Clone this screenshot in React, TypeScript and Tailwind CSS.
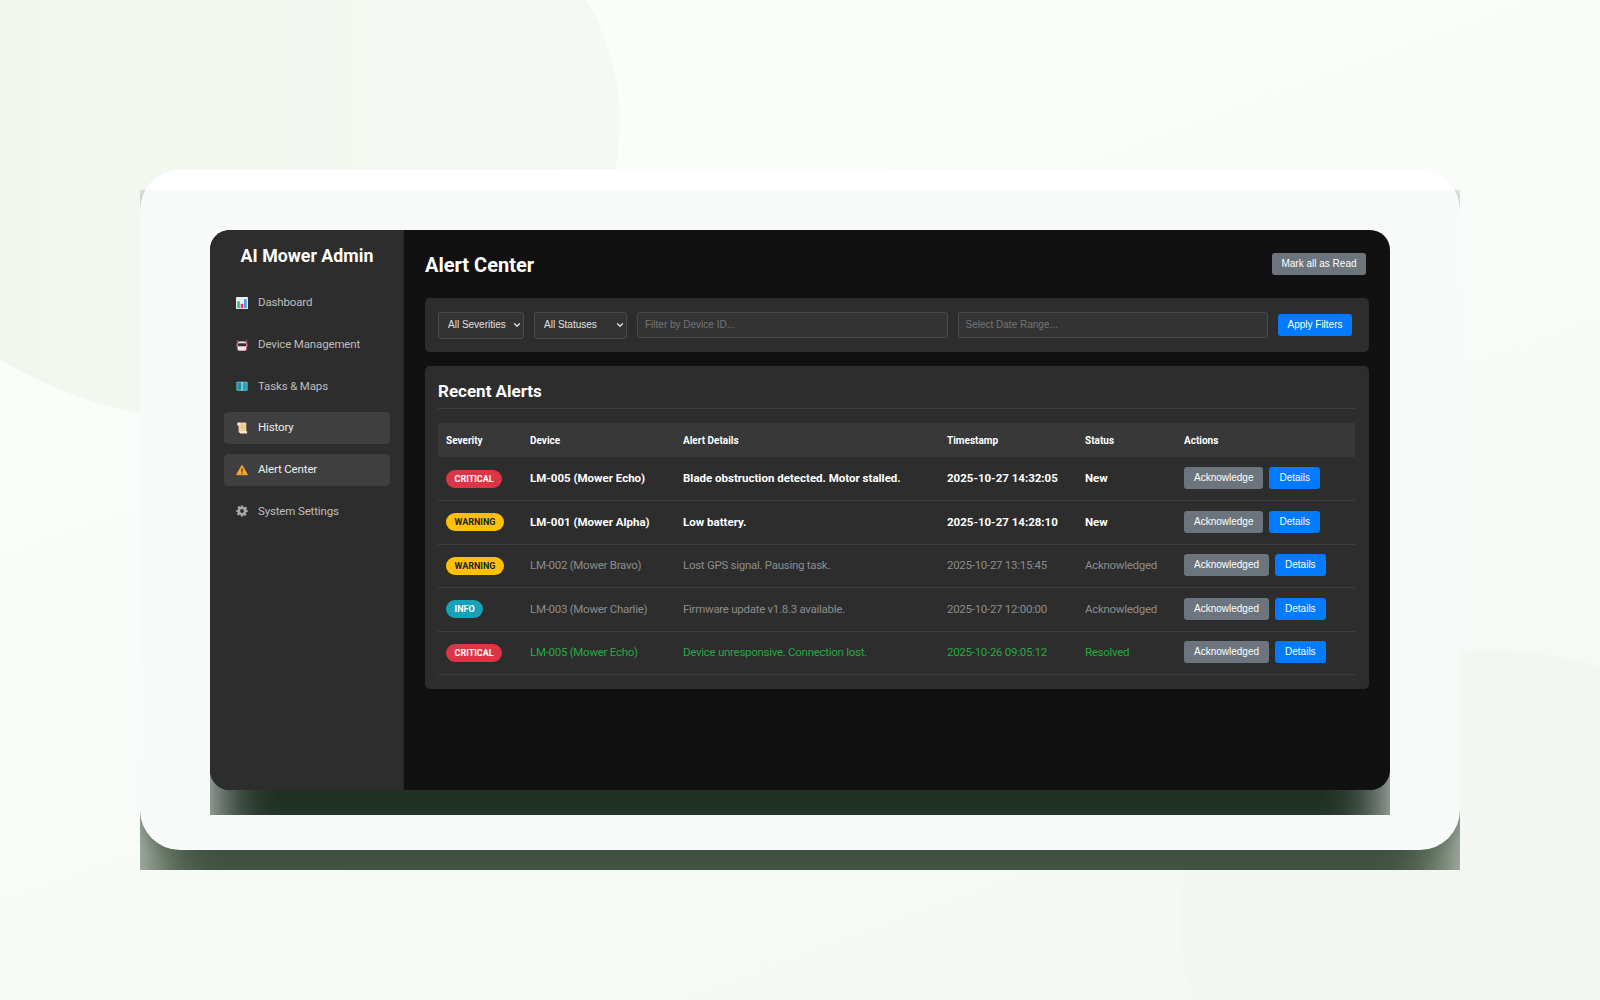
import React from 'react';
import { ChevronDown } from 'lucide-react';

const font = "font-['Liberation_Sans',Arial,sans-serif]";
const uiFont = "font-['Roboto','Noto_Sans',sans-serif]";

type Row = {
    severity: 'CRITICAL' | 'WARNING' | 'INFO';
    device: string;
    details: string;
    time: string;
    status: string;
    tone: 'new' | 'muted' | 'resolved';
    action: string;
};

const rows: Row[] = [
    { severity: 'CRITICAL', device: 'LM-005 (Mower Echo)', details: 'Blade obstruction detected. Motor stalled.', time: '2025-10-27 14:32:05', status: 'New', tone: 'new', action: 'Acknowledge' },
    { severity: 'WARNING', device: 'LM-001 (Mower Alpha)', details: 'Low battery.', time: '2025-10-27 14:28:10', status: 'New', tone: 'new', action: 'Acknowledge' },
    { severity: 'WARNING', device: 'LM-002 (Mower Bravo)', details: 'Lost GPS signal. Pausing task.', time: '2025-10-27 13:15:45', status: 'Acknowledged', tone: 'muted', action: 'Acknowledged' },
    { severity: 'INFO', device: 'LM-003 (Mower Charlie)', details: 'Firmware update v1.8.3 available.', time: '2025-10-27 12:00:00', status: 'Acknowledged', tone: 'muted', action: 'Acknowledged' },
    { severity: 'CRITICAL', device: 'LM-005 (Mower Echo)', details: 'Device unresponsive. Connection lost.', time: '2025-10-26 09:05:12', status: 'Resolved', tone: 'resolved', action: 'Acknowledged' },
];

const toneClass = {
    new: 'font-bold text-white',
    muted: 'text-[#8c8c8c] tracking-[-0.28px]',
    resolved: 'text-[#28a745] tracking-[-0.28px]',
};

const badgeClass = {
    CRITICAL: 'bg-[#dc3545] text-white',
    WARNING: 'bg-[#ffc107] text-[#212529]',
    INFO: 'bg-[#17a2b8] text-white',
};

const DashboardIcon = () => (
    <svg width="12" height="12" viewBox="0 0 14 14">
        <rect width="14" height="14" rx="1" fill="#e8eef2" />
        <rect x="1.5" y="5" width="3" height="8" fill="#2fc08f" />
        <rect x="5.5" y="8" width="3" height="5" fill="#e8327c" />
        <rect x="9.5" y="2.5" width="3" height="10.5" fill="#3b9fe0" />
    </svg>
);

const DeviceIcon = () => (
    <svg width="12" height="12" viewBox="0 0 14 14">
        <path d="M1 0.5 L3.5 3 H10.5 L13 0.5 V5 L14 7 L13 9 V12 Q13 14 11 14 H3 Q1 14 1 12 V9 L0 7 L1 5 Z" fill="#b8505f" />
        <rect x="2" y="3" width="10" height="10.5" rx="3" fill="#ece6e8" />
        <rect x="2.2" y="5" width="9.6" height="3.5" rx="1.4" fill="#2f2f3a" />
    </svg>
);

const MapIcon = () => (
    <svg width="12" height="12" viewBox="0 0 14 14">
        <rect x="0.5" y="2" width="13" height="10.5" rx="1" fill="#6cc8d6" />
        <rect x="1.5" y="3" width="5" height="8.5" fill="#1f8fa6" />
        <rect x="7.5" y="3" width="5" height="8.5" fill="#2d9fb5" />
        <rect x="6.5" y="2" width="1" height="10.5" fill="#b9e3ea" />
    </svg>
);

const ScrollIcon = () => (
    <svg width="12" height="12" viewBox="0 0 14 14">
        <rect x="3" y="0.5" width="9" height="12" rx="1" fill="#f3d39b" />
        <rect x="1.5" y="0.5" width="3" height="4" rx="1.2" fill="#fbe8c6" />
        <rect x="4.5" y="10.5" width="8.5" height="3" rx="1" fill="#fbe8c6" />
        <rect x="5.5" y="4" width="4.5" height="1" fill="#e2b778" />
        <rect x="5.5" y="6.5" width="4.5" height="1" fill="#e2b778" />
    </svg>
);

const WarningIcon = () => (
    <svg width="12" height="12" viewBox="0 0 14 14">
        <path d="M7 1.5 L13.4 12.5 H0.6 Z" fill="#f7a92e" stroke="#f7a92e" strokeLinejoin="round" />
        <rect x="6.3" y="5" width="1.4" height="4.2" fill="#3a2a10" />
        <rect x="6.3" y="10" width="1.4" height="1.4" fill="#3a2a10" />
    </svg>
);

const GearIcon = () => (
    <svg width="12" height="12" viewBox="0 0 24 24" fill="#a9a9ad">
        <path fillRule="evenodd" d="M10 1h4l.7 3.2 1.9.8 2.8-1.8 2.8 2.8-1.8 2.8.8 1.9L23.4 10v4l-3.2.7-.8 1.9 1.8 2.8-2.8 2.8-2.8-1.8-1.9.8L13 23.4h-3l-.7-3.2-1.9-.8-2.8 1.8-2.8-2.8 1.8-2.8-.8-1.9L.6 14v-4l3.2-.7.8-1.9L2.8 4.6 5.6 1.8l2.8 1.8 1.9-.8zM12 8.2a3.8 3.8 0 1 0 0 7.6 3.8 3.8 0 0 0 0-7.6z" />
    </svg>
);

const navItems = [
    { label: 'Dashboard', icon: <DashboardIcon />, active: false },
    { label: 'Device Management', icon: <DeviceIcon />, active: false },
    { label: 'Tasks & Maps', icon: <MapIcon />, active: false },
    { label: 'History', icon: <ScrollIcon />, active: true },
    { label: 'Alert Center', icon: <WarningIcon />, active: true },
    { label: 'System Settings', icon: <GearIcon />, active: false },
];

const Sidebar = () => (
    <aside className={`w-[194px] shrink-0 rounded-l-[20px] border-r border-[#262626] bg-[#2d2d2d] pl-[14px] pr-[13px] ${uiFont}`}>
        <h1 className="mt-[15px] text-center text-[17.8px] leading-[22px] font-bold text-white">AI Mower Admin</h1>
        <nav className="mt-[20px] flex flex-col gap-[9.7px]">
            {navItems.map(item => (
                <a
                    key={item.label}
                    className={`flex h-[32px] items-center gap-[10px] rounded-[4px] pl-[12px] text-[11.5px] tracking-[-0.15px] ${item.active ? 'bg-[#3f3f3f] text-[#ededed]' : 'text-[#bdbdbd]'}`}
                >
                    {item.icon}
                    <span>{item.label}</span>
                </a>
            ))}
        </nav>
    </aside>
);

const FilterSelect = ({ label, width }: { label: string; width: string }) => (
    <div className={`flex h-[27px] items-center justify-between rounded-[3px] border border-[#4a4a4a] bg-[#333333] pb-[1px] pl-[9px] pr-[1px] text-[10px] text-[#e0e0e0] ${width} ${font}`}>
        <span>{label}</span>
        <ChevronDown size={10} strokeWidth={3} className="text-[#e0e0e0]" />
    </div>
);

const FilterInput = ({ placeholder }: { placeholder: string }) => (
    <div className={`flex h-[26px] flex-1 items-center rounded-[3px] border border-[#4a4a4a] bg-[#333333] px-[7px] pb-[1px] text-[10px] text-[#757575] ${font}`}>
        {placeholder}
    </div>
);

const App = () => (
    <div className="relative h-[1000px] w-[1600px] overflow-hidden bg-[linear-gradient(160deg,#fdfffc_0%,#f5f7f4_100%)] pt-[170px]">
        {/* background blobs */}
        <div className="absolute left-[-148px] top-[-178px] h-[601px] w-[768px] rounded-[50%] bg-[linear-gradient(90deg,#f0f6ee,#f5f9f3)]" />
        <div className="absolute left-[1180px] top-[650px] h-[540px] w-[620px] rounded-[50%] bg-[#f3f7f1]" />

        <div className="relative mx-auto h-[680px] w-[1320px] rounded-[40px] bg-white">
            <div className="absolute inset-x-0 top-[20px] h-[680px] overflow-hidden">
                <div className="mt-[-20px] flex h-[680px] justify-center rounded-[40px] bg-[#f8f9f9] pt-[60px] shadow-[0_90px_70px_#3e523f,0_0_16px_rgba(110,120,110,0.6)]">
                    <div className="h-[585px] w-[1180px] overflow-hidden">
                        <div className="flex h-[560px] rounded-[20px] bg-[#111111] shadow-[0_80px_60px_#1f3024]">
                            <Sidebar />
                            <main className="min-w-0 flex-1 px-[21px] pt-[16px]">
                                <div className="flex h-[36px] items-center justify-between">
                                    <h2 className={`pt-[1px] text-[20px] font-bold text-white ${uiFont}`}>Alert Center</h2>
                                    <button className={`mr-[3px] h-[22px] rounded-[3px] bg-[#6c757d] px-[9.5px] pb-[1px] text-[10px] text-white ${font}`}>Mark all as Read</button>
                                </div>
                                <div className="mt-[16px] flex h-[54px] items-center gap-[10px] rounded-[5px] bg-[#2d2d2d] pl-[13px] pr-[17px]">
                                    <FilterSelect label="All Severities" width="w-[86px]" />
                                    <FilterSelect label="All Statuses" width="w-[93px]" />
                                    <FilterInput placeholder="Filter by Device ID..." />
                                    <FilterInput placeholder="Select Date Range..." />
                                    <button className={`h-[22px] rounded-[3px] bg-[#007bff] px-[9.5px] pb-[1px] text-[10px] text-white ${font}`}>Apply Filters</button>
                                </div>
                                <section className={`mt-[14px] rounded-[5px] bg-[#2d2d2d] pb-[14px] pl-[13px] pr-[14px] ${uiFont}`}>
                                    <h3 className="h-[43px] border-b border-[#3d3d3d] pt-[13px] text-[17px] leading-[24px] font-bold text-white">Recent Alerts</h3>
                                    <table className="mt-[14px] w-full table-fixed border-collapse text-left text-[11.5px]">
                                        <thead>
                                            <tr className="h-[34px] bg-[#383838] text-[10px] font-bold text-white">
                                                <th className="w-[92px] pl-[8px]">Severity</th>
                                                <th className="w-[153px]">Device</th>
                                                <th className="w-[264px]">Alert Details</th>
                                                <th className="w-[138px]">Timestamp</th>
                                                <th className="w-[99px]">Status</th>
                                                <th>Actions</th>
                                            </tr>
                                        </thead>
                                        <tbody>
                                            {rows.map((row, i) => (
                                                <tr key={i} className={`h-[43.5px] border-b border-[#3d3d3d] ${toneClass[row.tone]}`}>
                                                    <td className="pl-[8px] tracking-normal">
                                                        <span className={`inline-block rounded-full px-[8.5px] py-[3px] text-[9px] leading-[12px] font-bold ${badgeClass[row.severity]}`}>{row.severity}</span>
                                                    </td>
                                                    <td>{row.device}</td>
                                                    <td>{row.details}</td>
                                                    <td>{row.time}</td>
                                                    <td>{row.status}</td>
                                                    <td className="tracking-normal">
                                                        <div className={`flex items-center gap-[6px] pb-[1px] text-[10px] font-normal ${font}`}>
                                                            <button className="h-[22px] rounded-[3px] bg-[#6c757d] px-[10px] pb-[1px] text-white">{row.action}</button>
                                                            <button className="h-[22px] rounded-[3px] bg-[#007bff] px-[10px] pb-[1px] text-white">Details</button>
                                                        </div>
                                                    </td>
                                                </tr>
                                            ))}
                                        </tbody>
                                    </table>
                                </section>
                            </main>
                        </div>
                    </div>
                </div>
            </div>
        </div>
    </div>
);

export default App;
